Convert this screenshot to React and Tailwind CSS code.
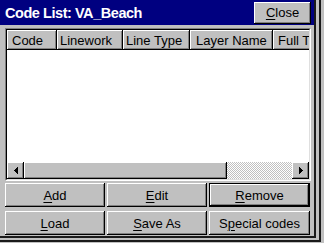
import React from "react";

const raised =
  "bg-[#c0c0c0] shadow-[inset_-1px_-1px_#000,inset_1px_1px_#fff,inset_-2px_-2px_#808080]";

function U({ children }) {
  return <span className="underline underline-offset-[2px] decoration-1">{children}</span>;
}

function Btn({ children, def }) {
  if (def) {
    return (
      <div className="h-[24px] border border-black">
        <div className={`h-full flex items-center justify-center ${raised}`}>{children}</div>
      </div>
    );
  }
  return <div className={`h-[24px] flex items-center justify-center ${raised}`}>{children}</div>;
}

function Arrow({ dir }) {
  return (
    <svg width="4" height="7" viewBox="0 0 4 7" shapeRendering="crispEdges">
      {dir === "left" ? (
        <g fill="#000">
          <rect x="3" y="0" width="1" height="7" />
          <rect x="2" y="1" width="1" height="5" />
          <rect x="1" y="2" width="1" height="3" />
          <rect x="0" y="3" width="1" height="1" />
        </g>
      ) : (
        <g fill="#000">
          <rect x="0" y="0" width="1" height="7" />
          <rect x="1" y="1" width="1" height="5" />
          <rect x="2" y="2" width="1" height="3" />
          <rect x="3" y="3" width="1" height="1" />
        </g>
      )}
    </svg>
  );
}

const cols = [
  { label: "Code", w: "w-[50px] pl-[5px]" },
  { label: "Linework", w: "w-[66px] pl-[3px]" },
  { label: "Line Type", w: "w-[67px] pl-[3px]" },
  { label: "Layer Name", w: "w-[83px] pl-[6px]" },
  { label: "Full Type", w: "w-[120px] pl-[5px]" },
];

export default function App() {
  return (
    <div className="w-[324px] h-[243px] bg-[#c0c0c0] overflow-hidden font-['Liberation_Sans',Arial,sans-serif] text-[13px] text-black leading-none">
      <div className="w-[321px] h-[242px] border-r-2 border-b-2 border-[#1a1a1a]">
        <div className="w-[316px] h-[238px] border-r-2 border-b-2 border-[#1a1a1a] flex flex-col">
          {/* title bar */}
          <div className="h-[25px] bg-[#000080] flex items-center justify-between pl-[5px] pr-[3px]">
            <span className="text-white font-bold text-[14.5px] tracking-[-0.45px] pt-[2px]">Code List: VA_Beach</span>
            <div className={`w-[57px] h-[22px] flex items-center justify-center ${raised}`}>
              <span><U>C</U>lose</span>
            </div>
          </div>

          {/* list view */}
          <div className="mt-[3px] ml-[5px] w-[306px] h-[153px] border border-t-[#808080] border-l-[#808080] border-r-white border-b-white">
            <div className="w-full h-full border border-t-black border-l-black border-r-[#dfdfdf] border-b-[#dfdfdf] flex flex-col overflow-hidden">
              <div className="h-[20px] flex shrink-0 overflow-hidden">
                {cols.map((c) => (
                  <div key={c.label} className={`${c.w} shrink-0 h-full flex items-center whitespace-nowrap ${raised}`}>
                    {c.label}
                  </div>
                ))}
              </div>
              <div className="h-[112px] bg-white shrink-0" />
              <div className="h-[17px] flex shrink-0">
                <div className={`w-[17px] h-full flex items-center justify-center ${raised}`}>
                  <Arrow dir="left" />
                </div>
                <div className={`w-[203px] h-full ${raised}`} />
                <div className="w-[65px] h-full bg-[repeating-conic-gradient(#c0c0c0_0%_25%,#ffffff_0%_50%)] bg-[length:2px_2px]" />
                <div className={`w-[17px] h-full flex items-center justify-center ${raised}`}>
                  <Arrow dir="right" />
                </div>
              </div>
            </div>
          </div>

          {/* buttons */}
          <div className="mt-[2px] ml-[5px] grid grid-cols-[100px_100px_101px] gap-x-[2px] gap-y-[4px]">
            <Btn><span><U>A</U>dd</span></Btn>
            <Btn><span><U>E</U>dit</span></Btn>
            <Btn def><span><U>R</U>emove</span></Btn>
            <Btn><span><U>L</U>oad</span></Btn>
            <Btn><span><U>S</U>ave As</span></Btn>
            <Btn><span>S<U>p</U>ecial codes</span></Btn>
          </div>
        </div>
      </div>
    </div>
  );
}
